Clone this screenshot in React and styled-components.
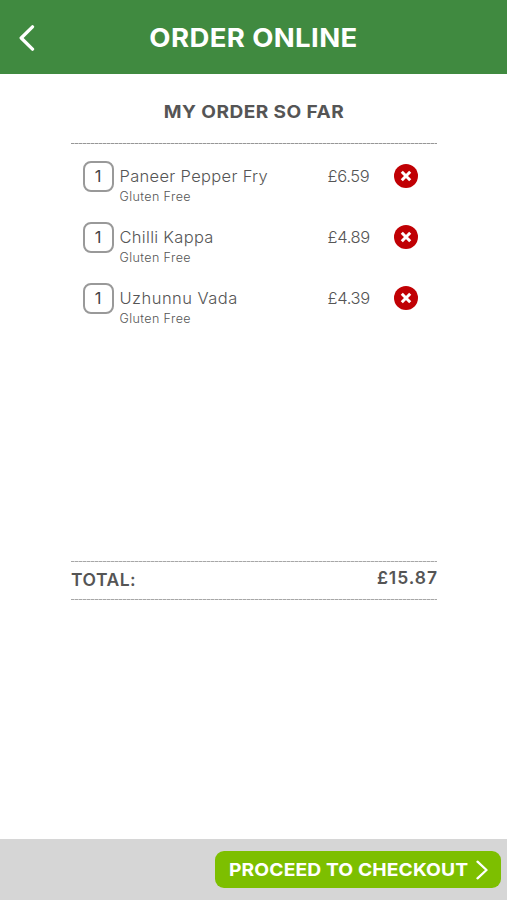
import React from 'react';
import styled, { createGlobalStyle, css } from 'styled-components';

const GlobalStyle = createGlobalStyle`
  * {
    box-sizing: border-box;
  }

  body {
    margin: 0;
    background: #fff;
    font-family: Inter, 'Liberation Sans', sans-serif;
  }

  button {
    padding: 0;
    border: 0;
    background: none;
    font-family: inherit;
    cursor: pointer;
  }
`;

// finer than the browser's own dashed border
const fineDashes = css`
  background-image: repeating-linear-gradient(90deg, #979797 0 3px, #c8c8c8 3px 4px);
`;

const Page = styled.div`
  display: flex;
  flex-direction: column;
  height: 900px;
  overflow: hidden;
`;

const Header = styled.header`
  display: grid;
  grid-template-columns: 54px 1fr 54px;
  align-items: center;
  height: 74px;
  padding-top: 2px;
  background: #408a40;
  color: #fff;
`;

const BackButton = styled.button`
  display: flex;
  justify-content: center;
  color: #fff;
`;

const Title = styled.h1`
  margin: 0;
  font-size: 25.5px;
  line-height: 32px;
  font-weight: 700;
  letter-spacing: 0.35px;
  text-align: center;
  white-space: nowrap;
  transform: scaleX(1.08);
`;

const Content = styled.main`
  display: flex;
  flex: 1;
  flex-direction: column;
  width: 366px;
  margin: 0 0 0 71px;
`;

const SectionTitle = styled.h2`
  height: 69px;
  margin: 0;
  padding-top: 26px;
  font-size: 17.5px;
  line-height: 24px;
  font-weight: 700;
  letter-spacing: 0.4px;
  text-align: center;
  white-space: nowrap;
  color: #555;
  transform: scaleX(1.09);
`;

const Divider = styled.div`
  flex: none;
  height: 1px;
  ${fineDashes}
  opacity: ${props => (props.$faint ? 0.85 : 1)};
`;

const ItemList = styled.ul`
  height: 417px;
  margin: 0;
  padding: 17px 19.5px 0 11.5px;
  list-style: none;
`;

const Item = styled.li`
  display: grid;
  grid-template-columns: 31px 1fr 60px 24px;
  column-gap: 6px;
  align-items: start;
  height: 61px;
`;

const Quantity = styled.span`
  height: 31px;
  border: 2px solid #999;
  border-radius: 8px;
  font-size: 16.5px;
  line-height: 27px;
  text-align: center;
  color: #444;
`;

const ItemName = styled.div`
  padding-top: 4px;
  font-size: 16.5px;
  line-height: 22px;
  font-weight: 300;
  letter-spacing: ${props => props.$tracking}px;
  white-space: nowrap;
  color: #555;
`;

const ItemNote = styled.div`
  font-size: 12.5px;
  line-height: 20px;
  font-weight: 300;
  letter-spacing: 0.4px;
  color: #555;
`;

const Price = styled.span`
  margin-right: 19px;
  padding-top: 4px;
  font-size: 16.5px;
  line-height: 22px;
  font-weight: 300;
  letter-spacing: -0.35px;
  white-space: nowrap;
  text-align: right;
  color: #555;
`;

const RemoveButton = styled.button`
  display: flex;
  align-items: center;
  justify-content: center;
  width: 24px;
  height: 24px;
  margin-top: 2.5px;
  border-radius: 50%;
  background: #c00004;
  color: #fff;
`;

const TotalRow = styled.div`
  display: flex;
  justify-content: space-between;
  height: 37px;
  font-weight: 600;
  line-height: 22px;
  color: #555;
`;

const TotalLabel = styled.span`
  padding-top: 7px;
  font-size: 17.5px;
  letter-spacing: 0.5px;
`;

const TotalValue = styled.span`
  padding-top: 5px;
  font-size: 17.5px;
  letter-spacing: 0.95px;
  margin-right: -1px;
`;

const Footer = styled.footer`
  display: flex;
  justify-content: flex-end;
  height: 61px;
  padding: 12px 6px 0 0;
  background: #d6d6d6;
`;

const CheckoutButton = styled.button`
  display: flex;
  align-items: center;
  justify-content: space-between;
  width: 286px;
  height: 37px;
  padding: 0 13px 0 14px;
  border-radius: 9px;
  background: #7dbf00;
  color: #fff;
`;

const CheckoutLabel = styled.span`
  font-size: 18px;
  font-weight: 700;
  letter-spacing: 0.1px;
  white-space: nowrap;
  transform: scaleX(1.07);
  transform-origin: left center;
`;

const items = [
  { name: 'Paneer Pepper Fry', note: 'Gluten Free', quantity: 1, price: 6.59, tracking: 0.32 },
  { name: 'Chilli Kappa', note: 'Gluten Free', quantity: 1, price: 4.89, tracking: 0.3 },
  { name: 'Uzhunnu Vada', note: 'Gluten Free', quantity: 1, price: 4.39, tracking: 0.47 }
];

const formatPrice = value => `£${value.toFixed(2)}`;

const BackIcon = () => (
  <svg width="16" height="26" viewBox="0 0 16 26" fill="none" stroke="currentColor" strokeWidth="3.3" strokeLinecap="round" strokeLinejoin="round">
    <path d="M13.5 1.8 2.2 13l11.3 11.2" />
  </svg>
);

const ForwardIcon = () => (
  <svg width="12" height="20" viewBox="0 0 12 20" fill="none" stroke="currentColor" strokeWidth="2.3" strokeLinecap="round" strokeLinejoin="round">
    <path d="m1.5 1.7 9 8.3-9 8.3" />
  </svg>
);

const CrossIcon = () => (
  <svg width="12" height="12" viewBox="0 0 12 12" fill="none" stroke="currentColor" strokeWidth="3">
    <path d="m1.8 1.8 8.4 8.4M10.2 1.8l-8.4 8.4" />
  </svg>
);

const App = () => {
  const total = items.reduce((sum, item) => sum + item.price * item.quantity, 0);

  return (
    <Page>
      <GlobalStyle />
      <Header>
        <BackButton aria-label="Back">
          <BackIcon />
        </BackButton>
        <Title>ORDER ONLINE</Title>
      </Header>

      <Content>
        <SectionTitle>MY ORDER SO FAR</SectionTitle>
        <Divider />
        <ItemList>
          {items.map(item => (
            <Item key={item.name}>
              <Quantity>{item.quantity}</Quantity>
              <div>
                <ItemName $tracking={item.tracking}>{item.name}</ItemName>
                <ItemNote>{item.note}</ItemNote>
              </div>
              <Price>{formatPrice(item.price)}</Price>
              <RemoveButton aria-label={`Remove ${item.name}`}>
                <CrossIcon />
              </RemoveButton>
            </Item>
          ))}
        </ItemList>
        <Divider $faint />
        <TotalRow>
          <TotalLabel>TOTAL:</TotalLabel>
          <TotalValue>{formatPrice(total)}</TotalValue>
        </TotalRow>
        <Divider $faint />
      </Content>

      <Footer>
        <CheckoutButton>
          <CheckoutLabel>PROCEED TO CHECKOUT</CheckoutLabel>
          <ForwardIcon />
        </CheckoutButton>
      </Footer>
    </Page>
  );
};

export default App;
